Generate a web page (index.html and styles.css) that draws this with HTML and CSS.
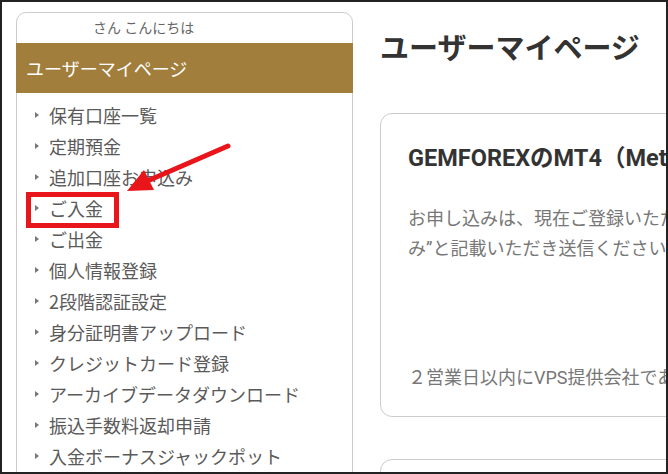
FILE: index.html
```html
<!DOCTYPE html>
<html lang="ja">
<head>
    <meta charset="UTF-8">
    <meta name="viewport" content="width=device-width, initial-scale=1.0">
    <title>ユーザーマイページ</title>
    <link rel="stylesheet" href="styles.css">
</head>
<body>
    <div class="screen">
        <aside class="sidebar">
            <div class="greeting">さん こんにちは</div>
            <div class="side-title">ユーザーマイページ</div>
            <ul class="menu">
                <li>保有口座一覧</li>
                <li>定期預金</li>
                <li>追加口座お申込み</li>
                <li>ご入金</li>
                <li>ご出金</li>
                <li>個人情報登録</li>
                <li>2段階認証設定</li>
                <li>身分証明書アップロード</li>
                <li>クレジットカード登録</li>
                <li>アーカイブデータダウンロード</li>
                <li>振込手数料返却申請</li>
                <li>入金ボーナスジャックポット</li>
            </ul>
        </aside>

        <main class="content">
            <h1>ユーザーマイページ</h1>
            <section class="card">
                <h2>GEMFOREXのMT4（MetaTrader4）専用VPSサービス</h2>
                <p>お申し込みは、現在ご登録いただいているメールアドレスより件名に“VPS申し込<br>み”と記載いただき送信ください。</p>
                <p class="note">２営業日以内にVPS提供会社であるお名前.comより設定完了のご連絡をいたします。</p>
            </section>
            <section class="card"></section>
        </main>

        <!-- annotation over the screenshot -->
        <div class="mark-box"></div>
        <svg class="mark-arrow" width="120" height="60" viewBox="0 0 120 60">
            <line x1="108" y1="7" x2="25" y2="43" stroke="#e8151b" stroke-width="5" stroke-linecap="round"/>
            <polygon points="7,52 24,31 34,51" fill="#e8151b"/>
        </svg>
    </div>
</body>
</html>
```

FILE: styles.css
```css
body {
    margin: 0;
    font-family: Roboto, "Noto Sans CJK JP", sans-serif;
    background-color: #fff;
}
.screen {
    position: relative;
    display: flex;
    gap: 27px;
    width: 668px;
    height: 474px;
    padding: 10px 0 0 14px;
    border: 2px solid #222;
    box-sizing: border-box;
    overflow: hidden;
    background-color: #fff;
}
.sidebar {
    flex: 0 0 337px;
    align-self: flex-start;
    height: 520px;
    border: 1px solid #ccc;
    border-radius: 10px;
    box-sizing: border-box;
    font-family: "Noto Sans CJK JP", sans-serif;
}
.greeting {
    padding-left: 76px;
    font-size: 14px;
    line-height: 28px;
    height: 30px;
    color: #666;
}
.side-title {
    height: 50px;
    margin: 0 -1px 0 -1px;
    padding-left: 10px;
    font-size: 18px;
    line-height: 50px;
    color: #fff;
    background-color: #a27e3d;
}
.menu {
    list-style: none;
    margin: 0;
    padding: 6px 0 0 18px;
}
.menu li {
    display: flex;
    align-items: center;
    height: 31px;
    font-size: 18px;
    color: #5a5a5a;
}
.menu li::before {
    content: "";
    margin-right: 10px;
    border-left: 4px solid #777;
    border-top: 3.5px solid transparent;
    border-bottom: 3.5px solid transparent;
}
.content {
    flex: 0 0 620px;
    padding-top: 14px;
}
.content h1 {
    margin: 0 0 47px;
    font-family: "Noto Sans CJK JP", sans-serif;
    font-size: 29px;
    line-height: 40px;
    font-weight: bold;
    color: #333;
}
.card {
    padding: 29px 27px 23px;
    margin-bottom: 42px;
    border: 1px solid #ccc;
    border-radius: 12px;
    min-height: 80px;
    white-space: nowrap;
}
.card h2 {
    margin: 0;
    font-size: 23.5px;
    line-height: 30px;
    font-weight: bold;
    color: #333;
}
.card p {
    margin: 31px 0 0;
    font-size: 18px;
    line-height: 30px;
    color: #777;
}
.card .note {
    margin-top: 99px;
}
.mark-box {
    position: absolute;
    left: 24px;
    top: 190px;
    width: 93px;
    height: 36px;
    border: 5px solid #e8151b;
    box-sizing: border-box;
}
.mark-arrow {
    position: absolute;
    left: 118px;
    top: 137px;
}
```
